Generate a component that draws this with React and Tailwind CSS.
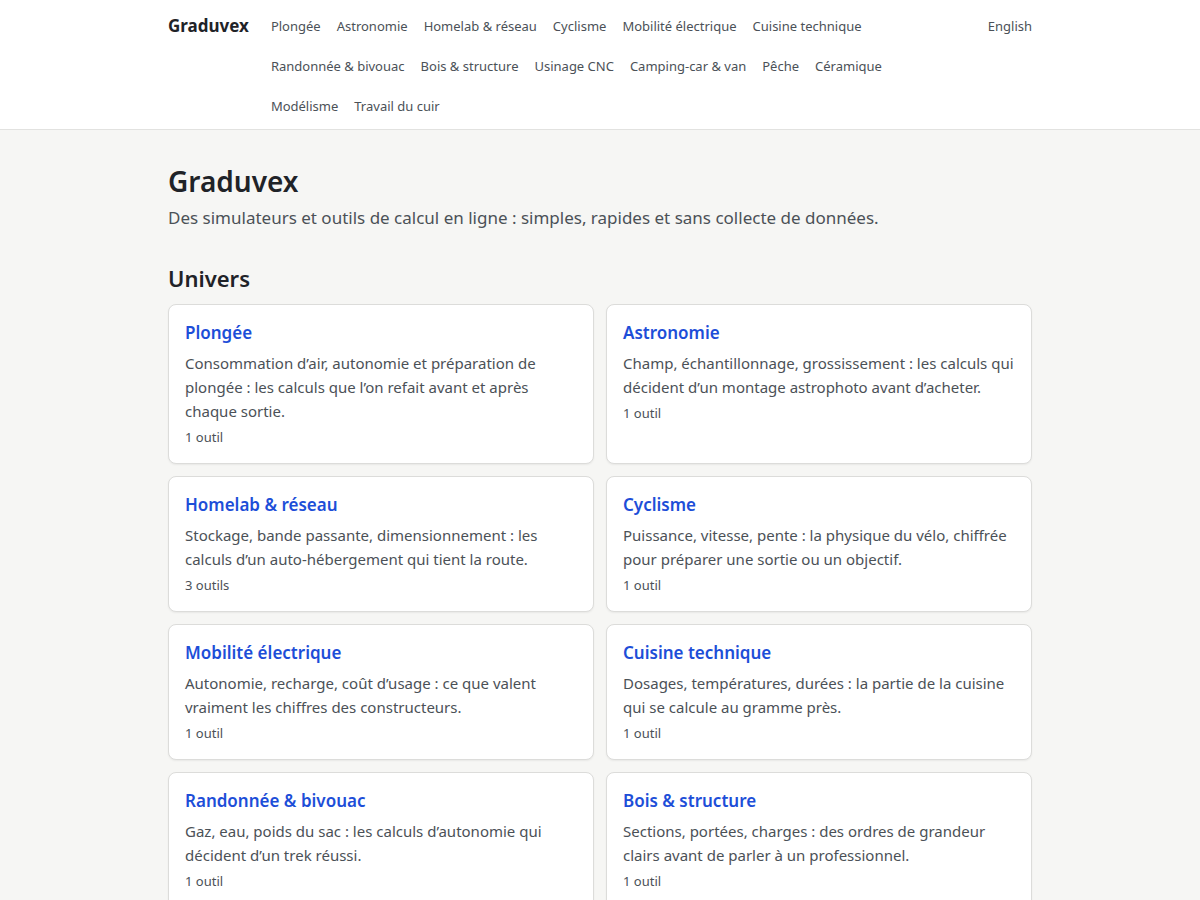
import React from "react";

const nav = [
  "Plongée",
  "Astronomie",
  "Homelab & réseau",
  "Cyclisme",
  "Mobilité électrique",
  "Cuisine technique",
  "Randonnée & bivouac",
  "Bois & structure",
  "Usinage CNC",
  "Camping-car & van",
  "Pêche",
  "Céramique",
  "Modélisme",
  "Travail du cuir",
];

const cards = [
  {
    t: "Plongée",
    d: "Consommation d’air, autonomie et préparation de plongée : les calculs que l’on refait avant et après chaque sortie.",
    n: "1 outil",
  },
  {
    t: "Astronomie",
    d: "Champ, échantillonnage, grossissement : les calculs qui décident d’un montage astrophoto avant d’acheter.",
    n: "1 outil",
  },
  {
    t: "Homelab & réseau",
    d: "Stockage, bande passante, dimensionnement : les calculs d’un auto-hébergement qui tient la route.",
    n: "3 outils",
  },
  {
    t: "Cyclisme",
    d: "Puissance, vitesse, pente : la physique du vélo, chiffrée pour préparer une sortie ou un objectif.",
    n: "1 outil",
  },
  {
    t: "Mobilité électrique",
    d: "Autonomie, recharge, coût d’usage : ce que valent vraiment les chiffres des constructeurs.",
    n: "1 outil",
  },
  {
    t: "Cuisine technique",
    d: "Dosages, températures, durées : la partie de la cuisine qui se calcule au gramme près.",
    n: "1 outil",
  },
  {
    t: "Randonnée & bivouac",
    d: "Gaz, eau, poids du sac : les calculs d’autonomie qui décident d’un trek réussi.",
    n: "1 outil",
  },
  {
    t: "Bois & structure",
    d: "Sections, portées, charges : des ordres de grandeur clairs avant de parler à un professionnel.",
    n: "1 outil",
  },
  {
    t: "Usinage CNC",
    d: "Vitesses de coupe, avances, temps d’usinage : les réglages de base d’une fraiseuse.",
    n: "1 outil",
  },
  {
    t: "Camping-car & van",
    d: "Batteries, panneaux, consommation : l’énergie à bord dimensionnée sans mauvaise surprise.",
    n: "1 outil",
  },
];

export default function App() {
  return (
    <div
      className="min-h-screen bg-[#f6f6f4] text-[#1f2328]"
      style={{ fontFamily: '"Noto Sans", "Open Sans", sans-serif' }}
    >
      <header className="bg-white border-b border-[#e2e2e0]">
        <div className="max-w-4xl mx-auto px-4 flex items-start pt-1.5 pb-[3px]">
          <a className="text-[17px] font-bold leading-10 text-[#1f2328] mr-[22px] shrink-0">
            Graduvex
          </a>
          <nav className="flex flex-wrap flex-1 gap-x-4">
            {nav.map((n) => (
              <a key={n} className="text-[13px] leading-10 text-[#4b5157]">
                {n}
              </a>
            ))}
          </nav>
          <a className="text-[13px] leading-10 text-[#4b5157] shrink-0 ml-12">English</a>
        </div>
      </header>
      <main className="max-w-4xl mx-auto px-4 pt-8 pb-8">
        <h1 className="text-[28px] font-semibold leading-[38px] text-[#1f2328]">Graduvex</h1>
        <p className="text-[17px] leading-7 text-[#4b5157] mt-1">
          Des simulateurs et outils de calcul en ligne : simples, rapides et sans collecte de données.
        </p>
        <h2 className="text-[22px] font-semibold leading-8 mt-[30px] mb-2.5 text-[#1f2328]">Univers</h2>
        <div className="grid grid-cols-2 gap-3">
          {cards.map((c) => (
            <div
              key={c.t}
              className="bg-white border border-[#dcdcda] rounded-lg p-4 shadow-[0_1px_2px_rgba(0,0,0,0.06)]"
            >
              <h3 className="text-[17px] font-semibold leading-6 text-[#1d4ed8]">{c.t}</h3>
              <p className="text-[15px] leading-6 text-[#4b5157] mt-1.5">{c.d}</p>
              <p className="text-[13px] leading-5 text-[#4b5157] mt-1">{c.n}</p>
            </div>
          ))}
        </div>
      </main>
    </div>
  );
}
